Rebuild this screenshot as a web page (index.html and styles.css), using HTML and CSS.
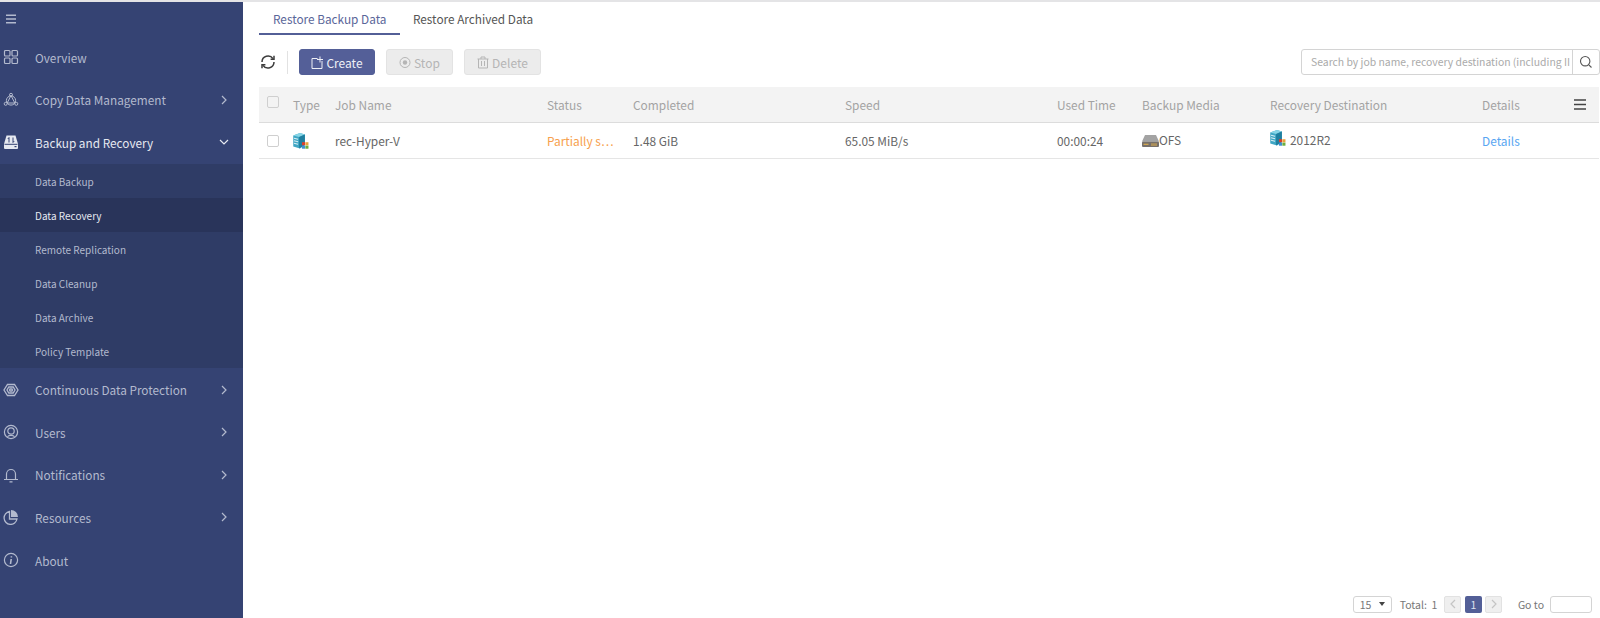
FILE: index.html
```html
<!DOCTYPE html>
<html>
  <head>
    <meta charset="UTF-8">
    <link rel="stylesheet" href="styles.css">
  </head>
  <body>
    <svg class="sprites" width="0" height="0">
      <symbol id="icon-server" viewBox="2 1 16 16.500">
        <path d="M2 3.500 9 1l5 1.500v11L9 17l-7-2z" fill="#3fa6c4"/>
        <path d="M2 3.500 9 1l5 1.500L8 5z" fill="#86d5e6"/>
        <path d="M8 5l6-2.500v11L8 17z" fill="#1f7f9f"/>
        <path d="M2.800 6.500 7 7.500M2.800 9 7 10M2.800 11.500 7 12.500" stroke="#d8eef4" stroke-width="1.100"/>
        <rect x="11" y="10.500" width="3.200" height="3.200" fill="#d9402e"/>
        <rect x="14.500" y="10.500" width="3.200" height="3.200" fill="#e9a33a"/>
        <rect x="11" y="14" width="3.200" height="3.200" fill="#3f8fd0"/>
        <rect x="14.500" y="14" width="3.200" height="3.200" fill="#6cae3e"/>
      </symbol>
      <symbol id="icon-chevron" viewBox="0 0 8 10">
        <path d="M2 1l4 4-4 4" fill="none" stroke="currentColor" stroke-width="1.200"/>
      </symbol>
    </svg>

    <div class="sidebar">
      <div class="collapse-row">
        <svg class="collapse-icon" viewBox="0 0 12 10"><path d="M1 1.300h10M1 5h10M1 8.700h10" stroke="currentColor" stroke-width="1.500"/></svg>
      </div>
      <div class="menu-item">
        <svg class="menu-icon" viewBox="0 0 16 16" fill="none" stroke="currentColor" stroke-width="1.200"><rect x="1.500" y="1.500" width="5.500" height="5.500" rx="1"/><rect x="9" y="1.500" width="5.500" height="5.500" rx="1"/><rect x="1.500" y="9" width="5.500" height="5.500" rx="1"/><rect x="9" y="9" width="5.500" height="5.500" rx="1"/></svg>
        <span class="menu-label">Overview</span>
      </div>
      <div class="menu-item">
        <svg class="menu-icon" viewBox="0 0 16 16" fill="none" stroke="currentColor" stroke-width="1"><path d="M8 3.500 11.800 11H4.200z"/><circle cx="8" cy="8.500" r="4.600"/><circle cx="8" cy="2.800" r="1.500"/><circle cx="2.700" cy="11.800" r="1.500"/><circle cx="13.300" cy="11.800" r="1.500"/></svg>
        <span class="menu-label">Copy Data Management</span>
        <svg class="menu-arrow"><use href="#icon-chevron"/></svg>
      </div>
      <div class="menu-item menu-item-open">
        <svg class="menu-icon" viewBox="0 0 16 16"><path d="M3.500 1.500h9l2.500 8.500v4a1 1 0 0 1-1 1H2a1 1 0 0 1-1-1v-4z" fill="currentColor"/><path d="M6 3.500v5M6 3.500 4.800 5M10 3.500v5M10 8.500 11.200 7M1.500 10.300h13" stroke="#354373" stroke-width="1" fill="none"/><rect x="11.500" y="12" width="2" height="1.200" fill="#354373"/></svg>
        <span class="menu-label">Backup and Recovery</span>
        <svg class="menu-arrow menu-arrow-open"><use href="#icon-chevron"/></svg>
      </div>
      <div class="submenu">
        <div class="submenu-item">Data Backup</div>
        <div class="submenu-item submenu-item-active">Data Recovery</div>
        <div class="submenu-item">Remote Replication</div>
        <div class="submenu-item">Data Cleanup</div>
        <div class="submenu-item">Data Archive</div>
        <div class="submenu-item">Policy Template</div>
      </div>
      <div class="menu-item">
        <svg class="menu-icon" viewBox="0 0 16 16" fill="none" stroke="currentColor" stroke-width="1.300"><path d="M4.500 2.500h7L15 8l-3.500 5.500h-7L1 8z"/><path d="M5.800 5h4.400L12 8l-1.800 3H5.800L4 8z"/><path d="M7 7h2l.5 1-.5 1H7l-.5-1z"/></svg>
        <span class="menu-label">Continuous Data Protection</span>
        <svg class="menu-arrow"><use href="#icon-chevron"/></svg>
      </div>
      <div class="menu-item">
        <svg class="menu-icon" viewBox="0 0 16 16" fill="none" stroke="currentColor" stroke-width="1.200"><circle cx="8" cy="8" r="6.600"/><circle cx="8" cy="7" r="3.200"/><path d="M4.500 12.800c1-1.800 6-1.800 7 0"/></svg>
        <span class="menu-label">Users</span>
        <svg class="menu-arrow"><use href="#icon-chevron"/></svg>
      </div>
      <div class="menu-item">
        <svg class="menu-icon" viewBox="0 0 16 16" fill="none" stroke="currentColor" stroke-width="1.200"><path d="M3.500 12.500V7a4.500 4.500 0 0 1 9 0v5.500M1 12.500h14M6.500 14.800h3"/></svg>
        <span class="menu-label">Notifications</span>
        <svg class="menu-arrow"><use href="#icon-chevron"/></svg>
      </div>
      <div class="menu-item">
        <svg class="menu-icon" viewBox="0 0 16 16"><path d="M6.500 2.500a6.500 6.500 0 1 0 7.500 7.500H6.500z" fill="none" stroke="currentColor" stroke-width="1.300"/><path d="M8 1a7 7 0 0 1 7 7H8z" fill="currentColor"/></svg>
        <span class="menu-label">Resources</span>
        <svg class="menu-arrow"><use href="#icon-chevron"/></svg>
      </div>
      <div class="menu-item">
        <svg class="menu-icon" viewBox="0 0 16 16" fill="none" stroke="currentColor" stroke-width="1.200"><circle cx="8" cy="8" r="6.600"/><path d="M8.400 4.200v1.300M8.200 7l-.7 5" stroke-width="1.600"/></svg>
        <span class="menu-label">About</span>
      </div>
    </div>

    <div class="main">
      <div class="tabs">
        <div class="tab tab-active">Restore Backup Data</div>
        <div class="tab">Restore Archived Data</div>
      </div>

      <div class="toolbar">
        <svg class="refresh" viewBox="0 0 16 16" fill="none" stroke="#3c3c3c" stroke-width="1.500"><path d="M2 8a6 6 0 0 1 11-3.300M14 8a6 6 0 0 1-11 3.300"/><path d="M14 1.800v3.400h-3.400M2 14.200v-3.400h3.400"/></svg>
        <span class="toolbar-divider"></span>
        <button class="btn btn-primary">
          <svg class="btn-icon" viewBox="0 0 12 13" fill="none" stroke="currentColor"><path d="M6.500 2.500h-5.500v10h10v-7.500M9 .5v6M6 3.500h6"/></svg>Create
        </button>
        <button class="btn btn-disabled">
          <svg class="btn-icon" viewBox="0 0 12 12" fill="none" stroke="currentColor"><circle cx="6" cy="6" r="5"/><circle cx="6" cy="6" r="2.200" fill="currentColor" stroke="none"/></svg>Stop
        </button>
        <button class="btn btn-disabled btn-delete">
          <svg class="btn-icon" viewBox="0 0 12 13" fill="none" stroke="currentColor"><path d="M.5 3h11M4 3V1h4v2M1.500 3v9h9V3M4.500 5v5M7.500 5v5"/></svg>Delete
        </button>
        <div class="search">
          <div class="search-input">Search by job name, recovery destination (including II</div>
          <div class="search-btn">
            <svg width="14" height="14" viewBox="0 0 14 14" fill="none" stroke="#555" stroke-width="1.100"><circle cx="6.200" cy="6.200" r="4.700"/><path d="M9.800 9.800l2.700 2.700"/></svg>
          </div>
        </div>
      </div>

      <div class="table">
        <div class="row row-head">
          <div class="cell cell-check"><span class="checkbox checkbox-head"></span></div>
          <div class="cell">Type</div>
          <div class="cell">Job Name</div>
          <div class="cell">Status</div>
          <div class="cell">Completed</div>
          <div class="cell">Speed</div>
          <div class="cell">Used Time</div>
          <div class="cell">Backup Media</div>
          <div class="cell">Recovery Destination</div>
          <div class="cell">Details</div>
          <div class="cell">
            <svg class="columns-icon" viewBox="0 0 12 11"><path d="M0 1h12M0 5.500h12M0 10h12" stroke="#444" stroke-width="1.300"/></svg>
          </div>
        </div>
        <div class="row">
          <div class="cell cell-check"><span class="checkbox"></span></div>
          <div class="cell"><svg class="type-icon"><use href="#icon-server"/></svg></div>
          <div class="cell">rec-Hyper-V</div>
          <div class="cell status-warning">Partially s⋯</div>
          <div class="cell">1.48 GiB</div>
          <div class="cell">65.05 MiB/s</div>
          <div class="cell">00:00:24</div>
          <div class="cell">
            <svg class="media-icon" viewBox="0 0 17 12" preserveAspectRatio="none"><path d="M3 1h11l3 6H0z" fill="#a3a3a3"/><rect y="7" width="17" height="5" rx="1" fill="#77706a"/><path d="M1.500 9.500h5" stroke="#e3b04b"/><path d="M10 8.500v2.500M12 8.500v2.500M14 8.500v2.500" stroke="#e3b04b"/></svg><span class="media-name">OFS</span>
          </div>
          <div class="cell cell-dest"><svg class="type-icon dest-icon"><use href="#icon-server"/></svg>2012R2</div>
          <div class="cell details-link">Details</div>
          <div class="cell"></div>
        </div>
      </div>

      <div class="pager">
        <div class="page-size">15<span class="page-size-caret"></span></div>
        <span class="total">Total:&nbsp; 1</span>
        <span class="page-btn page-btn-off"><svg class="flip" width="8" height="10"><use href="#icon-chevron"/></svg></span>
        <span class="page-btn page-btn-on">1</span>
        <span class="page-btn page-btn-off"><svg width="8" height="10"><use href="#icon-chevron"/></svg></span>
        <span class="goto">Go to</span>
        <span class="goto-input"></span>
      </div>
    </div>
  </body>
</html>
```

FILE: styles.css
```css
* {
  box-sizing: border-box;
}
html, body {
  height: 100%;
}
body {
  margin: 0;
  display: flex;
  overflow: hidden;
  border-top: 2px solid #e4e4e6;
  font-family: "Noto Sans CJK SC", "Noto Sans", sans-serif;
  font-size: 12px;
  color: #666;
  background: white;
}
.sprites {
  position: absolute;
}

/* sidebar */
.sidebar {
  width: 243px;
  flex: none;
  background: #354373;
  color: #b3bace;
}
.collapse-row {
  height: 34px;
  display: flex;
  align-items: center;
  padding-left: 5px;
}
.collapse-icon {
  width: 12px;
  height: 10px;
}
.menu-item {
  height: 42.600px;
  display: flex;
  align-items: center;
  padding: 0 15px 0 3px;
  font-size: 11.800px;
}
.menu-item-open {
  color: #e6e9f1;
}
.menu-icon {
  width: 16px;
  height: 16px;
  flex: none;
}
.menu-label {
  margin-left: 16px;
  flex: 1;
}
.menu-arrow {
  width: 8px;
  height: 10px;
}
.menu-arrow-open {
  transform: rotate(90deg);
}
.submenu {
  background: #2f3c66;
  font-size: 10px;
}
.submenu-item {
  height: 34.100px;
  line-height: 36px;
  padding-left: 35px;
}
.submenu-item-active {
  background: #29345a;
  color: #e6e9f1;
}

/* main */
.main {
  flex: 1;
  min-width: 0;
  display: flex;
  flex-direction: column;
  padding-left: 16px;
}
.tabs {
  display: flex;
  height: 33px;
}
.tab {
  height: 33px;
  padding: 0 13.500px 0 14px;
  line-height: 34px;
  font-size: 11.800px;
  color: #555;
}
.tab + .tab {
  padding-left: 13px;
}
.tab-active {
  color: #5a6699;
  border-bottom: 2px solid #535f97;
}
.toolbar {
  height: 26px;
  margin-top: 14px;
  display: flex;
  align-items: center;
}
.refresh {
  width: 16px;
  height: 16px;
  margin-left: 1px;
}
.toolbar-divider {
  width: 1px;
  height: 23px;
  margin: 0 11px;
  background: #e2e2e2;
}
.btn {
  height: 26px;
  margin-right: 11px;
  padding: 0;
  display: flex;
  align-items: center;
  justify-content: center;
  border-radius: 3px;
  font-family: inherit;
  font-size: 12px;
}
.btn-icon {
  width: 12px;
  height: 13px;
  margin-right: 3px;
}
.btn-primary {
  width: 76px;
  background: #545f98;
  border: 1px solid #535f97;
  color: #eef0f6;
}
.btn-disabled {
  width: 67px;
  background: #ececec;
  border: 1px solid #e3e3e3;
  color: #b5b5b5;
}
.btn-delete {
  width: 77px;
}
.search {
  width: 299px;
  height: 26px;
  margin-left: auto;
  display: flex;
  border: 1px solid #d4d4d4;
  border-radius: 3px;
  font-size: 10.400px;
  color: #aaa;
}
.search-input {
  flex: 1;
  padding-left: 9px;
  line-height: 23px;
  white-space: nowrap;
}
.search-btn {
  width: 27px;
  display: flex;
  align-items: center;
  justify-content: center;
  border-left: 1px solid #d4d4d4;
}

/* table */
.table {
  margin-top: 12px;
  margin-right: 1px;
}
.row {
  height: 36px;
  display: grid;
  grid-template-columns: 34px 42px 212px 86px 212px 212px 85px 128px 212px 93px 1fr;
  align-items: center;
  border-bottom: 1px solid #e5e5e5;
  font-size: 11.900px;
  color: #666;
}
.row-head {
  background: #f3f3f3;
  border-bottom-color: #dcdcdc;
  color: #a3a3a3;
}
.cell {
  display: flex;
  align-items: center;
  white-space: nowrap;
}
.cell-check {
  padding-left: 8px;
}
.checkbox {
  width: 12px;
  height: 12px;
  border: 1px solid #cfcfcf;
  border-radius: 2px;
  background: white;
}
.checkbox-head {
  margin-top: -5px;
  background: #f3f3f3;
}
.type-icon {
  width: 16px;
  height: 16px;
}
.dest-icon {
  margin: -4px 4px 0 0;
}
.cell-dest {
  margin-top: -2px;
}
.media-icon {
  width: 17px;
  height: 13px;
}
.media-name {
  margin-top: -2px;
}
.status-warning {
  color: #f79f4d;
}
.details-link {
  color: #58a6f2;
}
.columns-icon {
  width: 12px;
  height: 11px;
  margin-left: -1px;
}

/* pager */
.pager {
  margin-top: auto;
  height: 22px;
  margin-bottom: 3px;
  padding-right: 8px;
  display: flex;
  align-items: center;
  justify-content: flex-end;
  font-size: 10.500px;
  color: #777;
}
.page-size {
  width: 39px;
  height: 17px;
  padding: 0 6px;
  display: flex;
  align-items: center;
  justify-content: space-between;
  border: 1px solid #d4d4d4;
  border-radius: 3px;
}
.page-size-caret {
  border: 3.500px solid transparent;
  border-top: 4px solid #444;
  border-bottom: 0;
}
.total {
  margin: 0 7px 0 8px;
}
.page-btn {
  width: 17px;
  height: 17px;
  margin-right: 3.500px;
  display: flex;
  align-items: center;
  justify-content: center;
  border-radius: 2px;
}
.page-btn-off {
  background: #efefef;
  border: 1px solid #e2e2e2;
  color: #c4c4c4;
}
.page-btn-on {
  background: #535f97;
  color: #dfe2ee;
}
.flip {
  transform: scaleX(-1);
}
.goto {
  margin-left: 12px;
}
.goto-input {
  width: 42px;
  height: 17px;
  margin-left: 6px;
  border: 1px solid #d4d4d4;
  border-radius: 3px;
}
```
